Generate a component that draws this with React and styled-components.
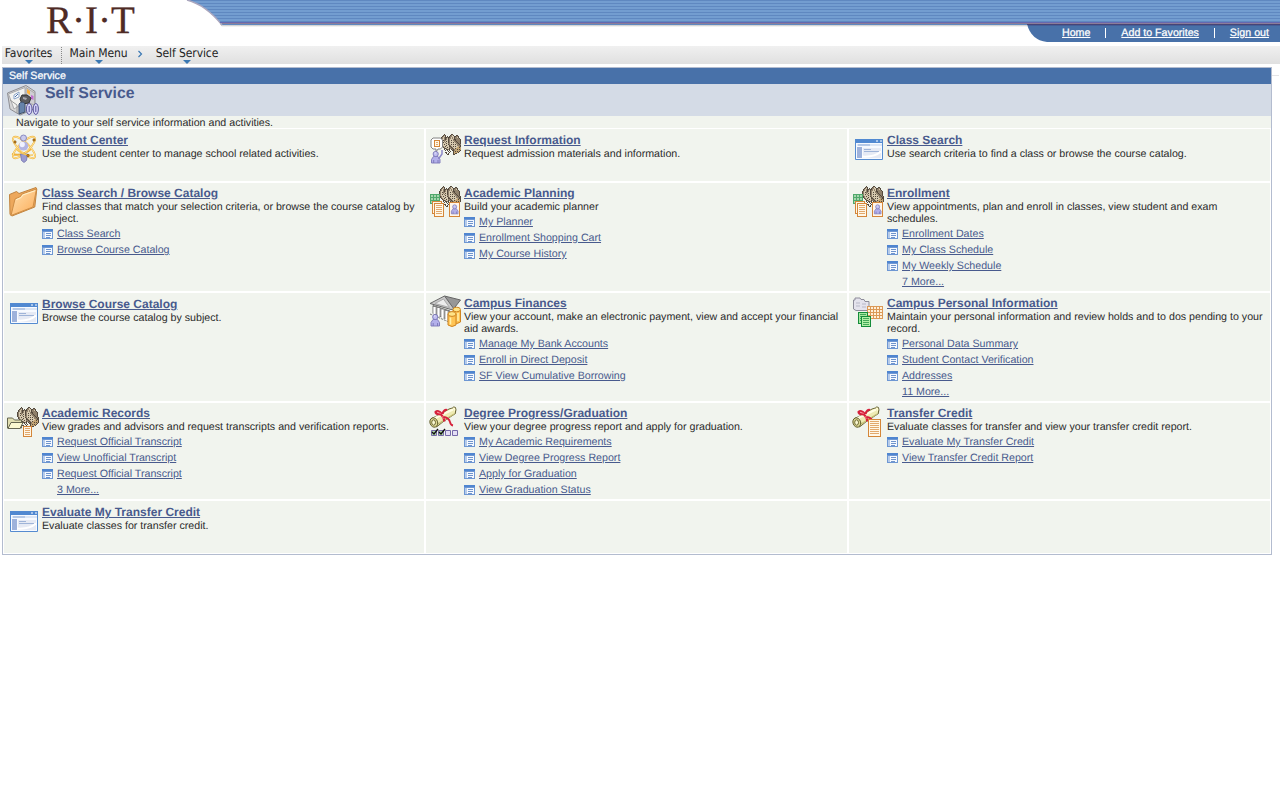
import React from "react";
import styled, { createGlobalStyle } from "styled-components";

const Global = createGlobalStyle`
  body { margin: 0; background: #fff; font-family: "Liberation Sans", Arial, sans-serif; font-size: 10.667px; line-height: 12px; color: #2b2b2b; text-rendering: geometricPrecision; }
  * { box-sizing: border-box; }
  svg { display: block; }
`;

const Page = styled.div`width: 1280px; height: 800px; overflow: hidden;`;
const Header = styled.header`height: 46px; display: flex; position: relative;`;
const BannerArt = styled.svg`position: absolute; left: 0; top: 0;`;
const Logo = styled.div`
  position: relative; margin-left: 46px; height: 46px;
  font: 39px/42px "Liberation Serif", serif; letter-spacing: 0; color: #4f2b25; white-space: nowrap;
  -webkit-text-stroke: 0.3px #4f2b25;
`;
const TopLinks = styled.nav`
  position: relative; margin-left: auto; margin-top: 24px; width: 253px; height: 18px; padding: 3px 11px 0 35px;
  display: flex; justify-content: space-between; align-items: flex-start;
`;
const TopLink = styled.a`color: #fff; line-height: 12px; text-decoration: underline; -webkit-text-stroke: 0.25px #fff;`;
const Divider = styled.span`width: 1px; height: 10px; margin-top: 1px; background: #fff;`;

const Crumbs = styled.nav`
  margin-left: 2px; height: 18px; display: flex; background: linear-gradient(#f0f0f0, #e0e0e0);
  font: 12px/14px "DejaVu Sans Condensed", "Noto Sans", sans-serif; color: #222; padding-left: 3px;
`;
const Crumb = styled.div`width: ${p => p.$w}px; margin-right: ${p => p.$gap}px; display: flex; flex-direction: column; align-items: center; white-space: nowrap; letter-spacing: -0.1px;`;
const Arrow = styled.i`border: 4px solid transparent; border-top-color: #3a78b3; border-bottom: 0;`;
const Dots = styled.span`height: 17px; margin: 1px 8px 0 0; border-left: 1px dotted #888;`;
const Chevron = styled.svg`margin: 4px 13px 0 0;`;

const Content = styled.div`display: flex; margin: 3px 0 0 2px;`;
const SideRule = styled.div`width: 7px; height: 1px; margin-top: 8px; background: #e4e4e6;`;
const Panel = styled.main`width: 1270px; height: 488px; border: 1px solid #b3bccf;`;
const TitleBar = styled.div`height: 16px; padding: 2px 6px; background: #4871a9; color: #fff; -webkit-text-stroke: 0.25px #fff;`;
const Heading = styled.div`height: 32px; background: #d4dbe6; display: flex; padding-left: 4px;`;
const H1 = styled.h1`margin: 1px 0 0 6px; font-size: 15.8px; line-height: 18px; color: #485a8d;`;
const Intro = styled.div`height: 12px; background: #f1f4ee; padding-left: 13px; line-height: 14px;`;
const Grid = styled.div`
  display: grid; grid-template-columns: 420px 421px 421px; grid-template-rows: 52px 108px 108px 96px 52px;
  gap: 2px; padding: 1px;
`;
const Cell = styled.section`background: #f1f4ee; display: flex; padding: ${p => (p.$plain ? 3 : 2)}px 3px 0 3px;`;
const IconBox = styled.div`width: 35px; flex: none;`;
const Body = styled.div`flex: 1; min-width: 0;`;
const Title = styled.a`display: block; width: max-content; height: 15px; font-size: 12px; line-height: 16px; font-weight: bold; color: #485a8d; text-decoration: underline;`;
const Desc = styled.div`margin-top: 1px; line-height: 12px; white-space: pre;`;
const Links = styled.div`display: flex; flex-direction: column; margin-top: 1px;`;
const LinkRow = styled.div`height: 16px; display: flex; align-items: flex-start; padding-left: ${p => (p.$more ? 15 : 0)}px;`;
const Link = styled.a`color: #485a8d; line-height: 17px; text-decoration: underline; white-space: nowrap;`;
const MiniIcon = styled.svg`margin: 3px 4px 0 0;`;

const Svg = ({ children }) => <svg width="32" height="32" viewBox="0 0 32 32">{children}</svg>;

const Mini = () => (
  <MiniIcon width="11" height="10" viewBox="0 0 11 10" shapeRendering="crispEdges">
    <path d="M0 0h11v10H0z" fill="#6e97d3" /><path d="M1 3h9v6H1z" fill="#f5f9ff" /><path d="M0 0h11v2H0z" fill="#4f85d0" />
    <path d="M1 3h2v6H1z" fill="#b6cbea" /><path d="M4 4h5M4 6h5M4 8h4" transform="translate(0 .5)" stroke="#6f94cc" />
  </MiniIcon>
);

const buildingRows = [
  "....k......kk.........",
  "...kbk....kblk..kk....",
  "..kblk.k.kbbllkkbbk...",
  ".kblbkkbkkblblkbblk...",
  ".kblbkblkbblblkbbbbk..",
  "kbllbkblkblllbkkbbbbk.",
  "kblkbbllkblklbbkbbbbk.",
  "kbllblklkbllllbbkbbbk.",
  "kblklbllkblklklbbkbbk.",
  "kbllllklbbllllllbbkbk.",
  ".kblklllkblklklklbbkbk",
  ".kblllkllkbllllllbbbkk",
  "..kblklllkkblklklltbkk",
  "...kbllklbbkbllllttktk",
  "....kkbllkbbkblktttttk",
  "....k.kkbk.kbkbttktktk",
  ".....k.k.k..kkbtttttk.",
  "........k.k..ktktktk..",
  ".....kk..k...kttttk...",
  "......k.k....ktkk.....",
  ".......kk....kk.......",
];
const buildingColors = { k: "#54493d", b: "#8f806b", l: "#d6c9af", t: "#c2a474" };
const buildingPaths = Object.keys(buildingColors).map(c => [
  c,
  buildingRows.map((r, y) => [...r].map((v, x) => (v === c ? `M${x} ${y}h1v1h-1z` : "")).join("")).join(""),
]);
const Building = ({ x = 0, y = 0 }) => (
  <g transform={`translate(${x} ${y})`} shapeRendering="crispEdges">
    {buildingPaths.map(([c, d]) => <path key={c} d={d} fill={buildingColors[c]} />)}
  </g>
);
const Person = ({ x = 0, y = 0 }) => (
  <g transform={`translate(${x} ${y})`} stroke="#7a76b8" strokeWidth=".9">
    <path d="M.5 12V8.5l2-3h4.5l2 3V12z" fill="#b3b0ea" /><path d="M2.7 9v3M7 9v3" /><circle cx="4.7" cy="3" r="2.6" fill="#c1bff0" /><path d="M3.7 2h1" stroke="#fff" />
  </g>
);
const Sheet = ({ x, y, w, h, c = "#d48639", f = "#fff7e7" }) => (
  <g transform={`translate(${x} ${y})`} stroke={c} shapeRendering="crispEdges">
    <rect x=".5" y=".5" width={w - 1} height={h - 1} fill={f} />
    {Array.from({ length: Math.floor((h - 3) / 2) }, (_, i) => <path key={i} d={`M2 ${2.5 + i * 2}H${w - 2}`} strokeOpacity=".7" />)}
  </g>
);
const Table = ({ x, y, w, h, c, f }) => (
  <g transform={`translate(${x} ${y})`} stroke={c} fill="none" shapeRendering="crispEdges">
    <rect width={w} height={h} fill={f} stroke="none" />
    {Array.from({ length: Math.floor((w - 1) / 3) + 1 }, (_, i) => <path key={i} d={`M${i * 3 + 0.5} 0v${h}`} />)}
    {Array.from({ length: Math.floor((h - 1) / 3) + 1 }, (_, i) => <path key={i} d={`M0 ${i * 3 + 0.5}h${w}`} />)}
  </g>
);
const Scroll = () => (
  <g stroke="#5c5827" strokeWidth=".9" strokeLinejoin="round">
    <path d="M2.5 13.5L12 9l8-5 5-1.5q2.5 1.500 1.500 6L15 16 7.500 22z" fill="#eeebb4" />
    <path d="M5 13.500L24 4.500" stroke="#fffde4" strokeWidth="2" /><path d="M9 19L25 9" stroke="#c4bf77" strokeWidth="1.300" />
    <ellipse cx="4.800" cy="17.500" rx="3.800" ry="4.800" fill="#dcd893" transform="rotate(-20 4.800 17.500)" /><ellipse cx="4.600" cy="17.500" rx="1.900" ry="2.700" fill="#f9f7cf" />
    <path d="M23.500 3q1-2 3-.5 1 2-.2 5" fill="#fffbd2" />
    <g fill="none" stroke="#d5223b" strokeWidth="2.200"><path d="M11.500 9q3 2.500 4 7.500M13 9Q9 4.500 6.500 7q0 2.500 5.500 2.500M13.500 9Q15 4 18 5" /><path d="M15 12q5 1 6 5 .5 3 3 3.500" strokeWidth="1.800" /></g>
    <path d="M8 7l4 1.500M13 11l1.500 3" stroke="#ff8592" strokeWidth=".7" />
  </g>
);

const icons = {
  student: (
    <Svg>
      <g fill="none" stroke="#efb23c" strokeWidth="1.900"><ellipse cx="17" cy="15.500" rx="14.500" ry="5" transform="rotate(44 17 15.500)" /><ellipse cx="17" cy="15.500" rx="14.500" ry="5" transform="rotate(-44 17 15.500)" /><path d="M5 22q10 3 19-5" /></g>
      <g fill="none" stroke="#ffe7a3" strokeWidth=".9"><ellipse cx="17" cy="15.500" rx="14.500" ry="5" transform="rotate(44 17 15.500)" /><ellipse cx="17" cy="15.500" rx="14.500" ry="5" transform="rotate(-44 17 15.500)" /></g>
      <path d="M13.500 22h7l-1 6.500-2.500 2-2.500-2z" fill="#9b9bd0" stroke="#7171ac" strokeWidth=".8" /><ellipse cx="16.500" cy="14" rx="4.700" ry="4.500" fill="#b3b5e2" /><ellipse cx="15.200" cy="12.500" rx="2.600" ry="2.800" fill="#f0f2ff" />
      <circle cx="16.500" cy="6" r="3" fill="#c9cbed" stroke="#7777b5" strokeWidth=".8" /><path d="M9 17q7 7 17 6" fill="none" stroke="#f6c452" strokeWidth="1.300" />
      <g fill="#d98513" stroke="#704f16" strokeWidth=".6"><circle cx="8" cy="10" r="1.200" /><circle cx="27" cy="8" r="1.200" /><circle cx="21" cy="23.500" r="1.200" /></g>
    </Svg>
  ),
  folder: (
    <Svg>
      <defs><linearGradient id="fold" x1="0" y1="0" x2="1" y2="1"><stop stopColor="#ffe2b3" /><stop offset="1" stopColor="#fcac57" /></linearGradient></defs>
      <path d="M2.500 9.500l7-3 2.500 2 17-6 .8 1.500-2 18L5 31l-2-1.500z" fill="#eda85c" stroke="#c18440" /><path d="M8 14l5.500-2.500 1.500-2.500 14.500-5-3.500 18L4 30.500z" fill="url(#fold)" stroke="#cf8e46" /><path d="M9 14.800l5.200-2.300 1.500-2.500 12.500-4.300" fill="none" stroke="#fff3ce" />
    </Svg>
  ),
  request: (
    <Svg>
      <Building x={10.500} y={2} /><path d="M4 6h7.500l2 2v7l-2 2H9l-2 3v-3H4l-2-2V8z" fill="#fff" stroke="#777" strokeWidth=".9" /><Sheet x={5} y={8} w={6} h={7} />
      <Person x={2} y={19} /><path d="M9.500 27l3.500-5v-4" fill="none" stroke="#8c88c8" strokeWidth="1.500" />
    </Svg>
  ),
  planning: (
    <Svg>
      <Building x={10} y={1} /><Table x={1} y={9} w={10} h={10} c="#50a86b" f="#a5d6ad" /><Sheet x={3} y={16} w={10} h={13} /><Sheet x={5} y={18} w={10} h={14} />
      <path d="M20.500 17.500h10v14h-10z" fill="#fff5e9" stroke="#d48639" shapeRendering="crispEdges" /><g transform="translate(22 19.500) scale(.78)"><Person /></g>
    </Svg>
  ),
  browser: (
    <Svg>
      <path d="M3.500 7.500h27v20h-27z" fill="#f7faff" stroke="#558bd0" /><path d="M3 7h28v4H3z" fill="#5189d1" /><path d="M24 9h2M28 9h2" stroke="#fff" /><path d="M5 12h25v2H5z" fill="#dce6f5" /><path d="M6 13h12" stroke="#91add9" />
      <path d="M5 15h5v11H5z" fill="#9eb2db" /><path d="M11 16h18v10H11z" fill="#e6eaf4" /><path d="M12 17.500h7M12 19.500h15" stroke="#9fb4d8" /><path d="M10 24.500q12 1 19-5" fill="none" stroke="#fff" strokeWidth="2" />
    </Svg>
  ),
  finances: (
    <Svg>
      <path d="M15.500 1L31.500 5l-7 9z" fill="#979797" stroke="#666" /><path d="M1 8.500L15.500 1l9.500 13-3 .5z" fill="#c9c9c9" stroke="#6a6a6a" /><path d="M6 8.500l8.500-4.500 6 8.500z" fill="#ededed" stroke="#aaa" />
      <path d="M4 10.500v8l17 7v-9.500z" fill="#909090" stroke="#777" /><path d="M5.500 12v7M9.500 13v8.500M13.500 14.500v8.500M17.500 16v9" stroke="#fff" strokeWidth="2.200" /><path d="M1 19l18 7.500" fill="none" stroke="#777" strokeDasharray="2 1" />
      <g transform="translate(1.500 19)"><Person /></g>
      <g fill="#ffc454" stroke="#cf8520"><path d="M24 15v12q4 3 7.500 0V15" /><ellipse cx="27.700" cy="14.500" rx="3.700" ry="2.300" fill="#ffe487" /><path d="M19 19v11q4 3 8 0V19" /><ellipse cx="23" cy="19" rx="4" ry="2.400" fill="#ffe487" /></g><path d="M21.500 22.500v7M29 18v8" stroke="#fff0a9" strokeWidth="1.500" />
    </Svg>
  ),
  personal: (
    <Svg>
      <path d="M1.500 14V5h1.500V3h5l1 1.500h3l1 2h4v9h-13z" fill="#e4e3ed" stroke="#8d8c9a" /><path d="M4 8h4M4 11h4M10 9h4M10 12h4" stroke="#b9b9c8" />
      <Table x={15} y={11} w={16} h={13} c="#db9957" f="#fff0d8" /><Sheet x={6} y={17} w={10} h={12} c="#148c3a" f="#a6e8a0" /><Sheet x={9} y={21} w={10} h={11} c="#148c3a" f="#b2efa6" />
    </Svg>
  ),
  records: (
    <Svg>
      <Building x={9.500} y={2} /><path d="M.5 23V13h5l2 2h7v8z" fill="#e2dfb1" stroke="#666650" /><path d="M1 23.500l3-6h12l-3 6z" fill="#fbf8d0" stroke="#666650" /><Sheet x={16} y={21} w={9} h={11} />
    </Svg>
  ),
  degree: (
    <Svg>
      <Scroll />{[2, 9, 16, 23].map((x, i) => <React.Fragment key={x}><path d={`M${x + 0.5} 25.500h5v5h-5z`} fill={i < 2 ? "#b2dba8" : "#e4def5"} stroke="#7669a9" />{i < 2 && <path d={`M${x + 1} 27l2 2 4-5`} fill="none" stroke="#111" strokeWidth="1.400" />}</React.Fragment>)}
    </Svg>
  ),
  transfer: <Svg><Scroll /><Sheet x={16} y={14} w={13} h={18} /></Svg>,
  cubicle: (
    <Svg>
      <path d="M.5 9L19 1.500l9 6v17L13 31 3 25z" fill="#d6d6d6" stroke="#8d8d92" /><path d="M1.500 10L18 3.500V18L7 25z" fill="#f2f2ef" stroke="#aaaaad" /><path d="M19 3.500l8.500 5.500v12l-8.500-3z" fill="#cfcfd4" stroke="#aaa" />
      <path d="M7 11l5-3v5l-5 2z" fill="#fff" stroke="#8aa4c9" /><path d="M8 13l3-3" stroke="#486fa8" /><path d="M20 5l3 2v4l-3-2z" fill="#ffb33a" /><path d="M24 11l2.500 1v4l-2.500-1z" fill="#c36ed2" /><path d="M13 15l2-4 5 0 4 3-2 5-7 1z" fill="#5b5b5e" stroke="#333" /><path d="M16 13l4 1-1 2-3-1z" fill="#aaaab0" />
      <path d="M12 30V20q3-4 6 0v8z" fill="#6683aa" stroke="#40516c" /><path d="M3 16l7 5v8" fill="none" stroke="#999" />
      <g fill="#d4d2f8" stroke="#5a559c"><ellipse cx="22.200" cy="25" rx="2.800" ry="5.500" /><ellipse cx="28.800" cy="25" rx="2.600" ry="5.500" /><path d="M22.200 22v6M28.800 22v6" fill="none" /></g>
    </Svg>
  ),
};

const cells = [
  { icon: "student", t: "Student Center", d: "Use the student center to manage school related activities." },
  { icon: "request", t: "Request Information", d: "Request admission materials and information." },
  { icon: "browser", t: "Class Search", d: "Use search criteria to find a class or browse the course catalog." },
  { icon: "folder", t: "Class Search / Browse Catalog", d: "Find classes that match your selection criteria, or browse the course catalog by\nsubject.", l: ["Class Search", "Browse Course Catalog"] },
  { icon: "planning", t: "Academic Planning", d: "Build your academic planner", l: ["My Planner", "Enrollment Shopping Cart", "My Course History"] },
  { icon: "planning", t: "Enrollment", d: "View appointments, plan and enroll in classes, view student and exam\nschedules.", l: ["Enrollment Dates", "My Class Schedule", "My Weekly Schedule"], m: "7 More..." },
  { icon: "browser", t: "Browse Course Catalog", d: "Browse the course catalog by subject." },
  { icon: "finances", t: "Campus Finances", d: "View your account, make an electronic payment, view and accept your financial\naid awards.", l: ["Manage My Bank Accounts", "Enroll in Direct Deposit", "SF View Cumulative Borrowing"] },
  { icon: "personal", t: "Campus Personal Information", d: "Maintain your personal information and review holds and to dos pending to your\nrecord.", l: ["Personal Data Summary", "Student Contact Verification", "Addresses"], m: "11 More..." },
  { icon: "records", t: "Academic Records", d: "View grades and advisors and request transcripts and verification reports.", l: ["Request Official Transcript", "View Unofficial Transcript", "Request Official Transcript"], m: "3 More..." },
  { icon: "degree", t: "Degree Progress/Graduation", d: "View your degree progress report and apply for graduation.", l: ["My Academic Requirements", "View Degree Progress Report", "Apply for Graduation", "View Graduation Status"] },
  { icon: "transfer", t: "Transfer Credit", d: "Evaluate classes for transfer and view your transfer credit report.", l: ["Evaluate My Transfer Credit", "View Transfer Credit Report"] },
  { icon: "browser", t: "Evaluate My Transfer Credit", d: "Evaluate classes for transfer credit." },
  {}, {},
];

export default function App() {
  return (
    <Page>
      <Global />
      <Header>
        <BannerArt width="1280" height="46">
          <defs>
            <pattern id="stripes" width="3" height="3" patternUnits="userSpaceOnUse"><rect width="3" height="3" fill="#739dd0" /><rect width="3" height="1" fill="#5f88c0" /></pattern>
            <linearGradient id="shade" x1="0" y1="0" x2="0" y2="1"><stop stopColor="#aaa" /><stop offset="1" stopColor="#fff" /></linearGradient>
          </defs>
          <path d="M220 24h1060v3H222z" fill="url(#shade)" />
          <path d="M187 0q19 5 35 25h1058V0z" fill="url(#stripes)" />
          <path d="M187 0q19 5 35 25" fill="none" stroke="#aaa6be" strokeWidth="1.500" />
          <path d="M220 22.500h1060" stroke="#6568b0" /><path d="M222 23.500h1058" stroke="#8b7c98" />
          <path d="M1027 24h253v18h-233q-16-2-20-18z" fill="#4871a9" /><path d="M1027 24.500h253" stroke="#474477" /><path d="M1028 25.500h252" stroke="#425f98" />
        </BannerArt>
        <Logo>R·I·T</Logo>
        <TopLinks><TopLink>Home</TopLink><Divider /><TopLink>Add to Favorites</TopLink><Divider /><TopLink>Sign out</TopLink></TopLinks>
      </Header>
      <Crumbs>
        <Crumb $w={47} $gap={9}>Favorites<Arrow /></Crumb><Dots />
        <Crumb $w={57} $gap={10}>Main Menu<Arrow /></Crumb>
        <Chevron width="6" height="8" viewBox="0 0 6 8"><path d="M1.500 1L4.500 4 1.500 7" fill="none" stroke="#3a78b3" strokeWidth="1.200" /></Chevron>
        <Crumb $w={62} $gap={0}>Self Service<Arrow /></Crumb>
      </Crumbs>
      <Content>
        <Panel>
          <TitleBar>Self Service</TitleBar>
          <Heading>{icons.cubicle}<H1>Self Service</H1></Heading>
          <Intro>Navigate to your self service information and activities.</Intro>
          <Grid>
            {cells.map((c, i) => (
              <Cell key={i} $plain={!c.l}>
                {c.t && (
                  <>
                    <IconBox>{icons[c.icon]}</IconBox>
                    <Body>
                      <Title>{c.t}</Title><Desc>{c.d}</Desc>
                      {c.l && <Links>{c.l.map((x, j) => <LinkRow key={j}><Mini /><Link>{x}</Link></LinkRow>)}{c.m && <LinkRow $more><Link>{c.m}</Link></LinkRow>}</Links>}
                    </Body>
                  </>
                )}
              </Cell>
            ))}
          </Grid>
        </Panel>
        <SideRule />
      </Content>
    </Page>
  );
}
